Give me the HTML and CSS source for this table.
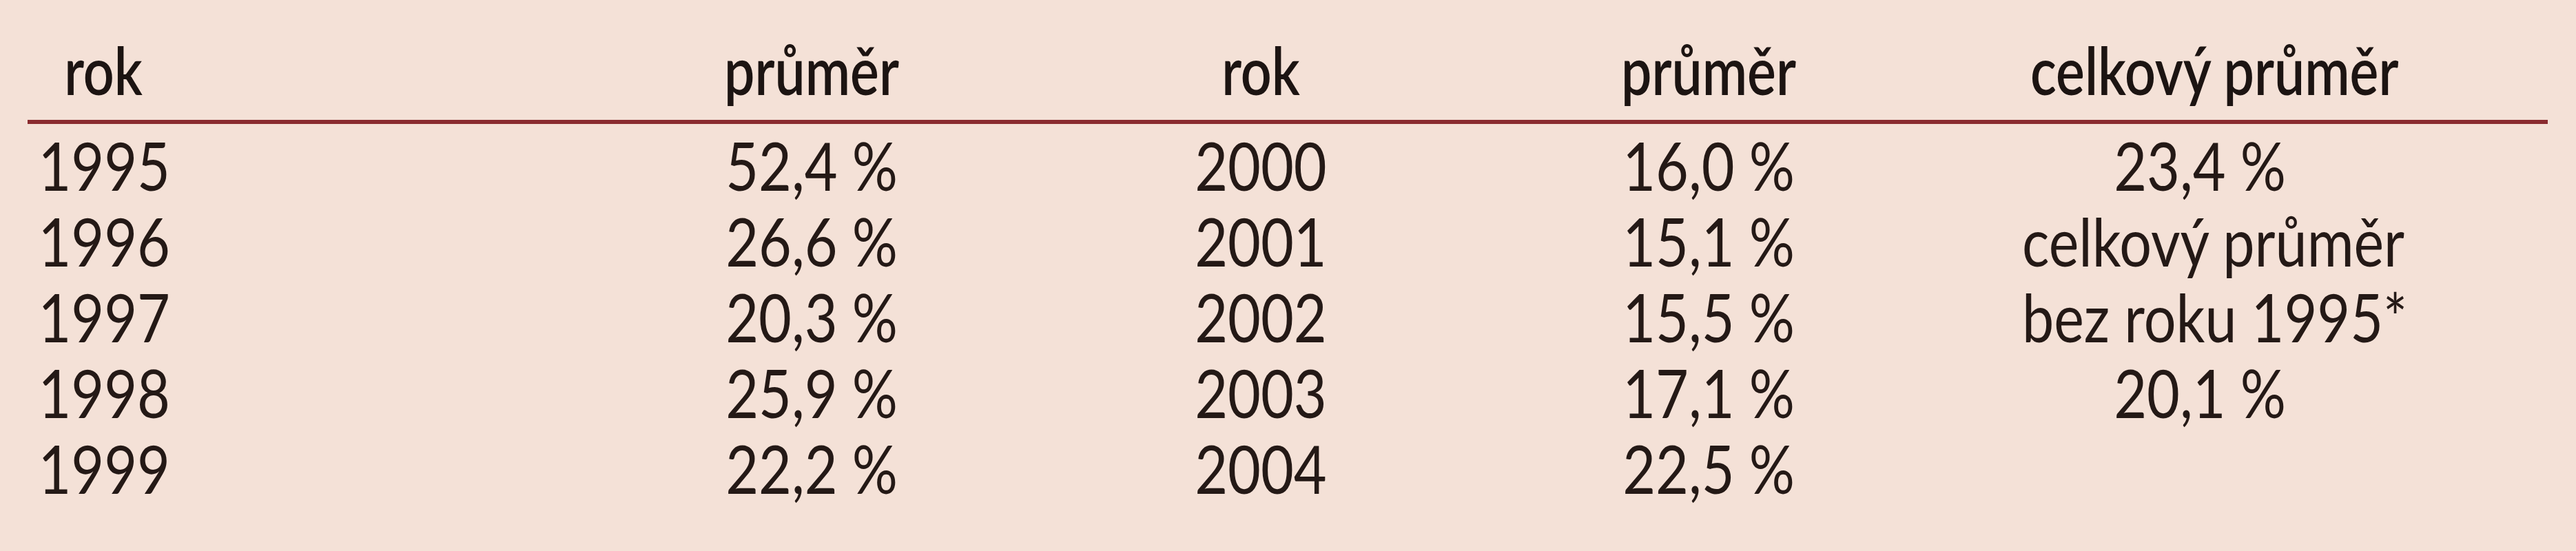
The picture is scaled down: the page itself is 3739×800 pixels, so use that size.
FILE: index.html
```html
<!DOCTYPE html>
<html lang="cs">
<head>
<meta charset="utf-8">
<title>Průměr podle let</title>
<link rel="stylesheet" href="styles.css">
</head>
<body>
<div class="table">
  <div class="row head">
    <div>rok</div><div>průměr</div><div>rok</div><div>průměr</div><div>celkový průměr</div>
  </div>
  <div class="body">
    <div class="row"><div>1995</div><div>52,4 %</div><div>2000</div><div>16,0 %</div><div>23,4 %</div></div>
    <div class="row"><div>1996</div><div>26,6 %</div><div>2001</div><div>15,1 %</div><div>celkový průměr</div></div>
    <div class="row"><div>1997</div><div>20,3 %</div><div>2002</div><div>15,5 %</div><div>bez roku 1995*</div></div>
    <div class="row"><div>1998</div><div>25,9 %</div><div>2003</div><div>17,1 %</div><div>20,1 %</div></div>
    <div class="row"><div>1999</div><div>22,2 %</div><div>2004</div><div>22,5 %</div><div></div></div>
  </div>
</div>
</body>
</html>
```

FILE: styles.css
```css
html, body {
  margin: 0;
  padding: 0;
  background: #f4e1d7;
}

body {
  width: 3739px;
  height: 800px;
  overflow: hidden;
  font-family: Lato, "DejaVu Sans Condensed", "Liberation Sans", sans-serif;
  font-size: 96px;
  font-weight: 400;
  color: #241916;
}

.table {
  margin-left: 40px;
  width: 3658px;
}

.row {
  display: grid;
  grid-template-columns: [c1] 220px 698px [c2] 440px 202px [c3] 460px 200px [c4] 440px 193px [c5] 600px 205px;
  line-height: 110px;
  text-align: center;
  white-space: nowrap;
}

.row > div {
  transform: scaleX(0.86);
}

.row > :nth-child(1) { grid-column: c1; }
.row > :nth-child(2) { grid-column: c2; }
.row > :nth-child(3) { grid-column: c3; }
.row > :nth-child(4) { grid-column: c4; }
.row > :nth-child(5) { grid-column: c5; }

.head {
  padding-top: 46px;
  padding-bottom: 18px;
  border-bottom: 6px solid #8a2b2f;
  font-weight: 600;
  color: #1c1412;
}

.head > div {
  transform: scaleX(0.82);
}

.body {
  padding-top: 5px;
}
```
